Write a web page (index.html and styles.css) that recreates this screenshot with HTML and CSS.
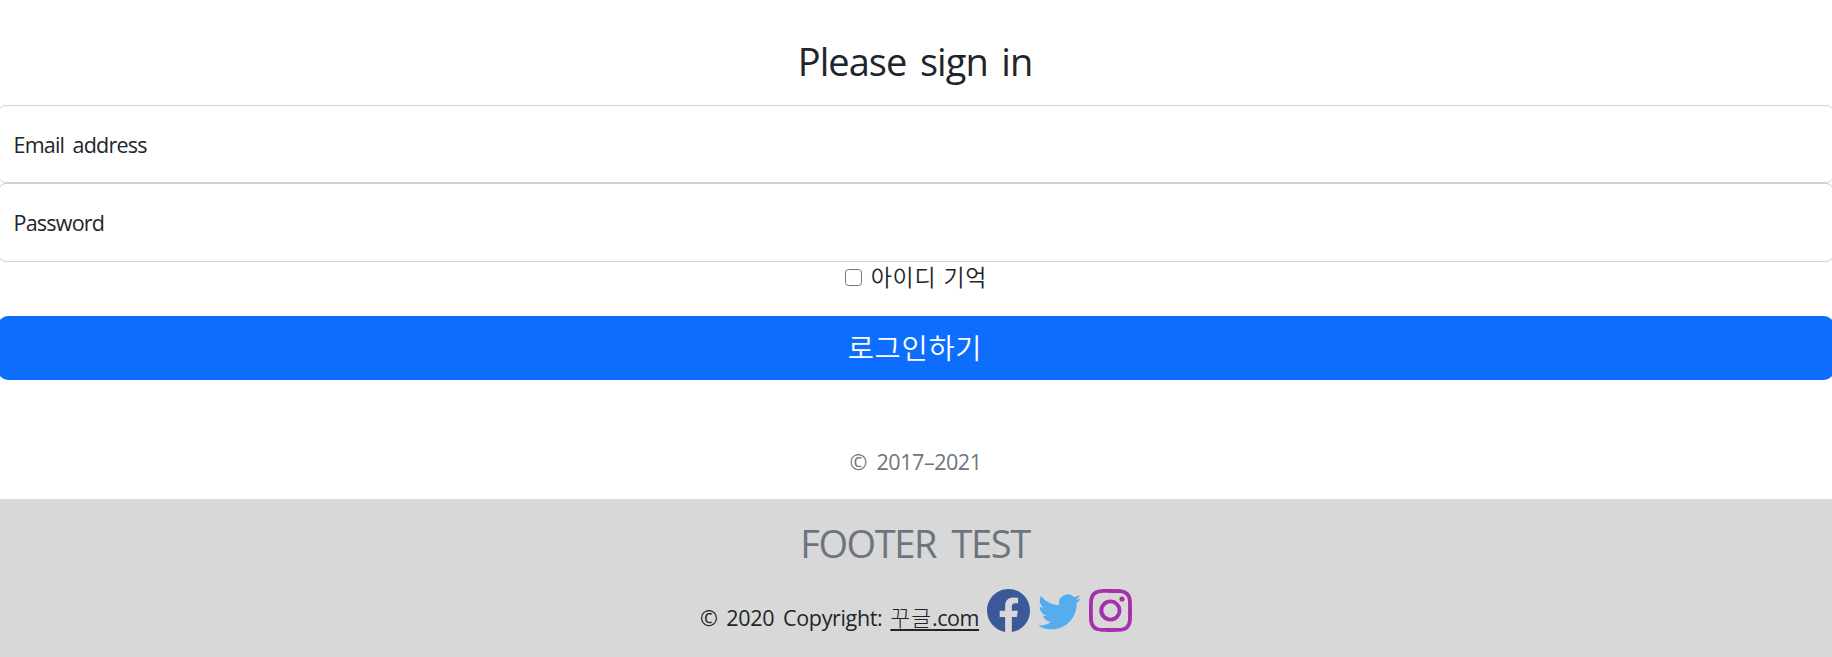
FILE: index.html
```html
<!DOCTYPE html>
<html lang="ko">
<head>
<meta charset="utf-8">
<title>Sign in</title>
<link rel="stylesheet" href="styles.css">
</head>
<body>
<main class="form-signin">
  <h1 class="heading">Please sign in</h1>
  <div class="field field-email">Email address</div>
  <div class="field field-password">Password</div>
  <label class="remember"><span class="check"></span><span class="remember-text">아이디 기억</span></label>
  <button class="submit" type="button">로그인하기</button>
  <p class="years">© 2017–2021</p>
</main>
<footer class="footer">
  <h2 class="footer-title">FOOTER TEST</h2>
  <div class="footer-row">
    <span class="copy">© 2020 Copyright:</span>
    <a class="link" href="#"><span class="link-name">꾸글</span>.com</a>
    <svg class="icon facebook" viewBox="0 0 16 16"><path d="M16 8.049c0-4.446-3.582-8.05-8-8.05C3.58 0-.002 3.603-.002 8.05c0 4.017 2.926 7.347 6.75 7.951v-5.625h-2.03V8.05H6.75V6.275c0-2.017 1.195-3.131 3.022-3.131.876 0 1.791.157 1.791.157v1.98h-1.009c-.993 0-1.303.621-1.303 1.258v1.51h2.218l-.354 2.326H9.25V16c3.824-.604 6.75-3.934 6.75-7.951z"/></svg>
    <svg class="icon twitter" viewBox="0 0 16 16"><path d="M5.026 15c6.038 0 9.341-5.003 9.341-9.334 0-.14 0-.282-.006-.422A6.685 6.685 0 0 0 16 3.542a6.658 6.658 0 0 1-1.889.518 3.301 3.301 0 0 0 1.447-1.817 6.533 6.533 0 0 1-2.087.793A3.286 3.286 0 0 0 7.875 6.03a9.325 9.325 0 0 1-6.767-3.429 3.289 3.289 0 0 0 1.018 4.382A3.323 3.323 0 0 1 .64 6.575v.045a3.288 3.288 0 0 0 2.632 3.218 3.203 3.203 0 0 1-.865.115 3.23 3.23 0 0 1-.614-.057 3.283 3.283 0 0 0 3.067 2.277A6.588 6.588 0 0 1 .78 13.58a6.32 6.32 0 0 1-.78-.045A9.344 9.344 0 0 0 5.026 15z"/></svg>
    <svg class="icon instagram" viewBox="0 0 16 16"><path d="M8 0C5.829 0 5.556.01 4.703.048 3.85.088 3.269.222 2.76.42a3.917 3.917 0 0 0-1.417.923A3.927 3.927 0 0 0 .42 2.76C.222 3.268.087 3.85.048 4.7.01 5.555 0 5.827 0 8.001c0 2.172.01 2.444.048 3.297.04.852.174 1.433.372 1.942.205.526.478.972.923 1.417.444.445.89.719 1.416.923.51.198 1.09.333 1.942.372C5.555 15.99 5.827 16 8 16s2.444-.01 3.298-.048c.851-.04 1.434-.174 1.943-.372a3.916 3.916 0 0 0 1.416-.923c.445-.445.718-.891.923-1.417.197-.509.332-1.09.372-1.942C15.99 10.445 16 10.173 16 8s-.01-2.445-.048-3.299c-.04-.851-.175-1.433-.372-1.941a3.926 3.926 0 0 0-.923-1.417A3.911 3.911 0 0 0 13.24.42c-.51-.198-1.092-.333-1.943-.372C10.443.01 10.172 0 7.998 0h.003zm-.717 1.442h.718c2.136 0 2.389.007 3.232.046.78.035 1.204.166 1.486.275.373.145.64.319.92.599.28.28.453.546.598.92.11.281.24.705.275 1.485.039.843.047 1.096.047 3.231s-.008 2.389-.047 3.232c-.035.78-.166 1.203-.275 1.485a2.47 2.47 0 0 1-.599.919c-.28.28-.546.453-.92.598-.28.11-.704.24-1.485.276-.843.038-1.096.047-3.232.047s-2.39-.009-3.233-.047c-.78-.036-1.203-.166-1.485-.276a2.478 2.478 0 0 1-.92-.598 2.48 2.48 0 0 1-.6-.92c-.109-.281-.24-.705-.275-1.485-.038-.843-.046-1.096-.046-3.233 0-2.136.008-2.388.046-3.231.036-.78.166-1.204.276-1.486.145-.373.319-.64.599-.92.28-.28.546-.453.92-.598.282-.11.705-.24 1.485-.276.738-.034 1.024-.044 2.515-.045v.002zm4.988 1.328a.96.96 0 1 0 0 1.92.96.96 0 0 0 0-1.92zm-4.27 1.122a4.109 4.109 0 1 0 0 8.217 4.109 4.109 0 0 0 0-8.217zm0 1.441a2.667 2.667 0 1 1 0 5.334 2.667 2.667 0 0 1 0-5.334z"/></svg>
  </div>
</footer>
</body>
</html>
```
FILE: styles.css
```css
* { box-sizing: border-box; }
body {
  margin: 0;
  overflow: hidden;
  background: #fff;
  color: #212529;
  font-family: "Open Sans", "Noto Sans CJK KR", sans-serif;
  font-size: 21.5px;
  line-height: 32px;
}
.form-signin { display: flex; flex-direction: column; height: 499px; padding-top: 35px; }
.heading, .footer-title { margin: 0; font-weight: 400; font-size: 38px; line-height: 52px; text-align: center; }
.heading { height: 70px; padding-right: 2px; letter-spacing: -0.95px; word-spacing: 4.6px; }
.field {
  margin: 0 -2px;
  height: 78px;
  padding: 23px 14.5px;
  border: 1px solid #cdd1d5;
  border-radius: 8px;
  letter-spacing: -0.78px;
  word-spacing: 3.5px;
}
.field-password { height: 79px; }
.remember {
  display: flex;
  justify-content: center;
  gap: 9px;
  height: 54px;
}
.remember-text { font-size: 23px; line-height: 30px; font-weight: 350; letter-spacing: 0.7px; word-spacing: 0.5px; }
.check {
  width: 17px;
  height: 17px;
  margin-top: 7px;
  border: 1.5px solid #767676;
  border-radius: 3.5px;
  background: #fff;
}
.submit {
  height: 64px;
  margin: 0 -2px;
  padding: 0 2px 4px 0;
  border: 0;
  border-radius: 10px;
  background: #0d6efd;
  color: #fff;
  font-family: inherit;
  font-size: 28.5px;
  font-weight: 350;
  letter-spacing: 0.7px;
}
.years { margin: 66px 0 0; padding-right: 1px; text-align: center; color: #6c757d; letter-spacing: -0.45px; word-spacing: 4.5px; }
.footer { height: 158px; padding-top: 18px; background: #d8d8d8; }
.footer-title { padding-right: 2px; color: #6c757d; letter-spacing: -1.4px; word-spacing: 7px; }
.footer-row { display: flex; justify-content: center; padding-top: 20px; }
.copy { margin: 13px 8px 0 0; letter-spacing: -0.35px; word-spacing: 3.7px; }
.link { margin: 13px 8px 0 0; color: #212529; text-underline-offset: 3px; text-decoration-thickness: 2px; letter-spacing: -0.4px; }
.link-name { font-weight: 300; letter-spacing: 1px; }
.icon { width: 43px; height: 43px; margin-right: 8px; }
.instagram { margin-right: 0; }
.facebook { fill: #3b5998; }
.twitter { fill: #55acee; }
.instagram { fill: #a62fac; }
```
